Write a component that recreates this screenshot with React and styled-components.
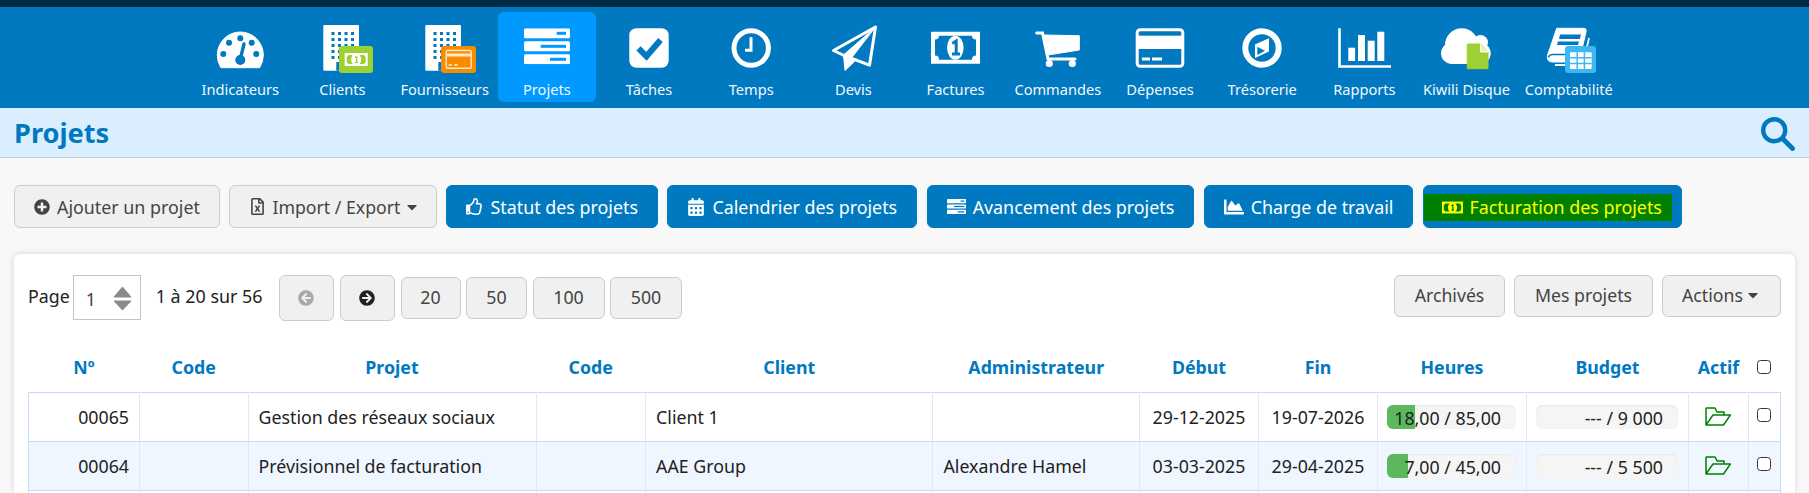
import React from "react";
import styled, { createGlobalStyle } from "styled-components";
import {
  FaPlusCircle,
  FaRegFileExcel,
  FaCaretDown,
  FaRegThumbsUp,
  FaChartArea,
  FaArrowCircleLeft,
  FaArrowCircleRight,
} from "react-icons/fa";
import { FaCalendarDays } from "react-icons/fa6";

const BLUE = "#0079c1";
const FONT = `"Noto Sans", "Open Sans", sans-serif`;

const Global = createGlobalStyle`
  html, body { margin: 0; padding: 0; background: #f8f8f8; }
  body { font-family: ${FONT}; overflow: hidden; }
  * { box-sizing: border-box; }
`;

const Page = styled.div`
  height: 493px;
  overflow: hidden;
  display: flex;
  flex-direction: column;
`;
const TopStrip = styled.div`
  height: 7px;
  background: #002b47;
  flex: none;
`;
const Nav = styled.nav`
  height: 101px;
  flex: none;
  background: ${BLUE};
  padding-top: 5px;
  display: flex;
  justify-content: center;
  gap: 4.2px;
`;
const NavItem = styled.a`
  width: 98px;
  height: 90px;
  border-radius: 6px;
  background: ${(p) => (p.$active ? "#0099ff" : "transparent")};
  display: flex;
  flex-direction: column;
  align-items: center;
  padding-top: 12px;
  color: #fff;
`;
const NavIconSvg = styled.svg`
  width: 60px;
  height: 50px;
  overflow: visible;
  flex: none;
`;
const NavLabel = styled.span`
  font-size: 14.6px;
  line-height: 20px;
  margin-top: 5px;
  white-space: nowrap;
  color: #f2f8fc;
`;
const TitleBar = styled.header`
  height: 50px;
  flex: none;
  background: #dbeeff;
  border-bottom: 1px solid #b8c9db;
  display: flex;
  align-items: center;
  justify-content: space-between;
  padding: 0 14px;
`;
const Title = styled.h1`
  margin: 1px 0 0;
  font-size: 27.2px;
  font-weight: 700;
  color: ${BLUE};
  line-height: 1;
`;
const SearchSvg = styled.svg`
  width: 34px;
  height: 34px;
  margin-top: 2px;
`;
const ActionBar = styled.div`
  display: flex;
  gap: 9.5px;
  padding: 27px 14px 26px;
  flex: none;
`;
const Btn = styled.button`
  height: 43px;
  font-family: ${FONT};
  font-size: 17.85px;
  border-radius: 6px;
  display: inline-flex;
  align-items: center;
  gap: 7px;
  padding: 0 19px;
  white-space: nowrap;
  border: 1px solid ${(p) => (p.$primary ? BLUE : "#cccccc")};
  background: ${(p) => (p.$primary ? BLUE : "#f0f0f0")};
  color: ${(p) => (p.$primary ? "#fff" : "#444")};
  svg { flex: none; }
`;
const ImportBtn = styled(Btn)`
  gap: 6px;
  font-size: 17.7px;
  padding-right: 15.5px;
`;
const HighlightBtn = styled(Btn)`
  padding: 0 9px 0 0;
`;
const Highlight = styled.span`
  height: 27px;
  background: #008000;
  color: #ffff00;
  display: inline-flex;
  align-items: center;
  gap: 6px;
  padding: 0 10px 0 18.5px;
  margin-top: 1px;
`;
const Card = styled.section`
  flex: 1;
  margin: 0 14px;
  background: #fff;
  border-radius: 6px 6px 0 0;
  box-shadow: 0 0 6px rgba(0, 0, 0, 0.14);
  padding: 21px 14px 0;
  min-height: 0;
`;
const Toolbar = styled.div`
  display: flex;
  align-items: flex-start;
  height: 46px;
  margin-bottom: 21px;
`;
const PageLabel = styled.span`
  font-size: 17.8px;
  color: #222;
  margin-right: 3px;
  line-height: 42px;
`;
const PageInput = styled.div`
  width: 68px;
  height: 45px;
  border: 1px solid #c4c4c4;
  display: flex;
  align-items: center;
  justify-content: space-between;
  padding: 2px 8px 0 12px;
  font-size: 17.8px;
  color: #444;
  background: #fff;
`;
const RangeText = styled.span`
  font-size: 17.9px;
  color: #222;
  line-height: 42px;
  margin: 0 16px 0 15px;
  white-space: nowrap;
`;
const IconBtn = styled.button`
  width: 55.5px;
  height: 45.5px;
  margin-right: 5.5px;
  border: 1px solid #cccccc;
  border-radius: 6px;
  background: #f0f0f0;
  display: flex;
  align-items: center;
  justify-content: center;
  color: ${(p) => (p.$off ? "#a8a8a8" : "#222")};
  font-size: 16px;
`;
const SizeBtn = styled.button`
  height: 42px;
  margin: 2px 5.5px 0 0;
  padding: 0 0 2px;
  width: ${(p) => p.$w}px;
  border: 1px solid #cccccc;
  border-radius: 6px;
  background: #f0f0f0;
  font-family: ${FONT};
  font-size: 17.8px;
  color: #444;
`;
const Spacer = styled.div`
  flex: 1;
`;
const RightBtn = styled.button`
  height: 42px;
  padding: 0 0 2px;
  width: ${(p) => p.$w}px;
  margin-left: 9px;
  border: 1px solid #cccccc;
  border-radius: 6px;
  background: #f0f0f0;
  font-family: ${FONT};
  font-size: 17.7px;
  color: #444;
  display: inline-flex;
  align-items: center;
  justify-content: center;
  gap: 5px;
`;
const Table = styled.table`
  width: 1752px;
  table-layout: fixed;
  border-collapse: collapse;
  font-size: 17.8px;
`;
const Th = styled.th`
  height: 50px;
  padding: 0;
  color: ${BLUE};
  font-weight: 700;
  text-align: center;
  vertical-align: middle;
`;
const Row = styled.tr`
  background: ${(p) => (p.$alt ? "#eff6ff" : "#fff")};
  td {
    border-top: 1px solid #c9d9fb;
    border-bottom: 1px solid #c9d9fb;
  }
  td:first-child { border-left: 1px solid #c9d9fb; }
  td:last-child { border-right: 1px solid #c9d9fb; }
`;
const Td = styled.td`
  height: 49px;
  padding: 0 ${(p) => (p.$align === "center" ? 0 : 10)}px;
  color: #222;
  text-align: ${(p) => p.$align || "left"};
  border-left: 1px solid #e5e8ee;
  border-right: 1px solid #e5e8ee;
  white-space: nowrap;
`;
const Bar = styled.div`
  position: relative;
  height: 24px;
  margin: 1px -0.5px 0;
  border-radius: 6px;
  background: #f5f5f5;
  box-shadow: inset 0 1px 2px rgba(0, 0, 0, 0.06);
  overflow: hidden;
  text-align: right;
  padding-right: 15.5px;
  line-height: 26px;
  color: #222;
`;
const BarFill = styled.div`
  position: absolute;
  left: 0;
  top: 0;
  bottom: 0;
  background: #5cb85c;
`;
const BarText = styled.span`
  position: relative;
`;
const Check = styled.input.attrs({ type: "checkbox" })`
  appearance: none;
  width: 14px;
  height: 14px;
  border: 1.4px solid #333;
  border-radius: 3.5px;
  background: #fff;
  display: block;
  margin: ${(p) => (p.$head ? "0 auto" : "-3px auto 0")};
`;
const FolderSvg = styled.svg`
  width: 26px;
  height: 19px;
  display: block;
  margin: 0 auto 1px;
`;
const Caret = styled(FaCaretDown)`
  margin-left: -3px;
  font-size: 16px;
`;
const ImportCaret = styled(FaCaretDown)`
  margin-left: -2px;
  font-size: 16px;
`;

/* ---------- drawn icons ---------- */
const NavIcon = ({ children }) => <NavIconSvg viewBox="0 0 60 50">{children}</NavIconSvg>;

const building = (x) => {
  const dots = [];
  [8.2, 14.7, 21.2, 27.7].forEach((cx) =>
    [8, 14, 20, 26, 32].forEach((cy) => dots.push(<rect key={cx + "-" + cy} x={x + cx} y={cy} width="3" height="3" fill={BLUE} />))
  );
  return (
    <>
      <rect x={x} y="1" width="35.7" height="45.7" rx="1" fill="#fff" />
      {dots}
      <rect x={x + 13} y="38" width="5" height="8.7" fill={BLUE} />
    </>
  );
};

const Gauge = () => (
  <NavIcon>
    <path d="M11 43.7Q7.3 38 7.3 31A23 23 0 0 1 53.3 31Q53.3 38 49.6 43.7Z" fill="#fff" stroke="#fff" strokeLinejoin="round" />
    {[[30.3, 14.3], [19, 18.7], [41.7, 18.7], [13.3, 30], [46.3, 30]].map(([cx, cy]) => (
      <circle key={cx} cx={cx} cy={cy} r="3" fill={BLUE} />
    ))}
    <path d="M34 20L30.3 35" stroke={BLUE} strokeWidth="3.4" strokeLinecap="round" />
    <circle cx="30.3" cy="36" r="5" fill={BLUE} />
  </NavIcon>
);
const MiniCash = ({ x, y, fg = "#fff", hole = "#9ed033" }) => (
  <g transform={`translate(${x} ${y})`}>
    <rect width="23" height="13" fill={fg} />
    <path d="M3.5 2H19.5Q19.5 3.5 21 3.5V9.5Q19.5 9.5 19.5 11H3.5Q3.5 9.5 2 9.5V3.5Q3.5 3.5 3.5 2Z" fill={hole} />
    <ellipse cx="11.5" cy="6.5" rx="5" ry="6" fill={fg} />
    <path d="M10.4 4.6L11.9 3.6V9.4M10.4 9.4H13.3" fill="none" stroke={hole} strokeWidth="1.3" />
  </g>
);
const Clients = () => (
  <NavIcon>
    {building(11.3)}
    <rect x="27" y="22" width="34" height="27" rx="3" fill="#9ed033" />
    <MiniCash x="32.7" y="29" />
  </NavIcon>
);
const Suppliers = () => (
  <NavIcon>
    {building(10.3)}
    <rect x="26" y="22" width="35" height="27" rx="3" fill="#f78c00" />
    <rect x="31.2" y="26.5" width="25" height="17.7" rx="1.2" fill="none" stroke="#ffe6c4" strokeWidth="1.4" />
    <rect x="31" y="29.5" width="25.4" height="3" fill="#ffe6c4" />
    <path d="M33.5 41H37M39 41H43" stroke="#ffe6c4" strokeWidth="1.4" />
  </NavIcon>
);
const Bars = ({ w = 46, h = 36, notch = "#0099ff" }) => (
  <svg viewBox="0 0 46 36" width={w} height={h}>
    {[[0, 32.7], [13, 16.7], [26, 26]].map(([y, x]) => (
      <g key={y}>
        <rect y={y} width="46" height="10" rx="1.5" fill="#fff" />
        <rect x={x} y={y + 3.5} width={42 - x} height="3" fill={notch} />
      </g>
    ))}
  </svg>
);
const Projects = () => (
  <NavIcon>
    <svg x="7" y="4.3" width="46" height="36" viewBox="0 0 46 36">
      {[[0, 32.7], [13, 16.7], [26, 26]].map(([y, x]) => (
        <g key={y}>
          <rect y={y} width="46" height="10" rx="1.5" fill="#fff" />
          <rect x={x} y={y + 3.5} width={42 - x} height="3" fill="#0099ff" />
        </g>
      ))}
    </svg>
  </NavIcon>
);
const Tasks = () => (
  <NavIcon>
    <rect x="10.3" y="4.3" width="39.4" height="39.4" rx="7" fill="#fff" />
    <path d="M19.5 24.3L27.5 32.3L41.5 16" fill="none" stroke={BLUE} strokeWidth="6" />
  </NavIcon>
);
const Clock = () => (
  <NavIcon>
    <circle cx="30.2" cy="24" r="17.2" fill="none" stroke="#fff" strokeWidth="5" />
    <path d="M30 13.3V26.3H24" fill="none" stroke="#fff" strokeWidth="3" />
  </NavIcon>
);
const Plane = () => (
  <NavIcon>
    <path d="M52.5 3L10.5 26.5L21 31.5L46.5 41.2Z" fill="none" stroke="#fff" strokeWidth="3" strokeLinejoin="round" />
    <path d="M52.5 3L20.5 31L22 46.5L31.5 37.5L28.5 34Z" fill="#fff" stroke="#fff" strokeLinejoin="round" />
  </NavIcon>
);
const Cash = () => (
  <NavIcon>
    <rect x="5" y="7.7" width="49" height="32" rx="0.5" fill="#fff" />
    <path d="M13 11.7H46Q46 15.5 50 15.5V31.5Q46 31.5 46 35.7H13Q13 31.5 9 31.5V15.5Q13 15.5 13 11.7Z" fill={BLUE} />
    <ellipse cx="29.3" cy="23.7" rx="8.3" ry="12" fill="#fff" />
    <path d="M26.3 19.5L30.2 17V30M26 30H34" fill="none" stroke={BLUE} strokeWidth="3" />
  </NavIcon>
);
const Cart = () => (
  <NavIcon>
    <path d="M8.7 9H14.5L20 35H47" fill="none" stroke="#fff" strokeWidth="3" strokeLinecap="round" />
    <path d="M15 11L51.3 11.7V26L20 31Z" fill="#fff" stroke="#fff" strokeLinejoin="round" />
    <circle cx="21.3" cy="39.5" r="3.6" fill="#fff" />
    <circle cx="44.3" cy="39.5" r="3.6" fill="#fff" />
  </NavIcon>
);
const CreditCard = () => (
  <NavIcon>
    <rect x="7.2" y="5.8" width="45.6" height="36.4" rx="3" fill="none" stroke="#fff" strokeWidth="3" />
    <rect x="7" y="11.7" width="46" height="13.3" fill="#fff" />
    <path d="M12 35H20M22 35H32" stroke="#fff" strokeWidth="3" />
  </NavIcon>
);
const Compass = () => (
  <NavIcon>
    <circle cx="30" cy="24" r="16.7" fill="none" stroke="#fff" strokeWidth="6" />
    <path d="M23 20.5L37 14.3V27.5L23 34Z" fill="#fff" />
    <path d="M25.3 22.7V31L33 26.7Z" fill={BLUE} />
  </NavIcon>
);
const Reports = () => (
  <NavIcon>
    <path d="M5.5 4.3V42.5H57" fill="none" stroke="#fff" strokeWidth="2.6" />
    <rect x="14.3" y="23.7" width="6.8" height="13.3" fill="#fff" />
    <rect x="24" y="11" width="7" height="26" fill="#fff" />
    <rect x="33.7" y="16.7" width="7" height="20.3" fill="#fff" />
    <rect x="43.3" y="7.7" width="7" height="29.3" fill="#fff" />
  </NavIcon>
);
const CloudDoc = () => (
  <NavIcon>
    <circle cx="24.7" cy="21" r="16.7" fill="#fff" />
    <circle cx="14.7" cy="29.3" r="10.7" fill="#fff" />
    <circle cx="43.5" cy="18.5" r="7.5" fill="#fff" />
    <circle cx="43" cy="29.3" r="10.7" fill="#fff" />
    <rect x="15" y="24" width="28" height="16" fill="#fff" />
    <path d="M30.3 20H43.5L51 28V44.7H30.3Z" fill="#9ed033" stroke="#9ed033" strokeLinejoin="round" />
    <path d="M43.5 20V28H51" fill="#e9f5cc" stroke="#fff" strokeWidth="1" />
  </NavIcon>
);
const Accounting = () => (
  <NavIcon>
    <path d="M17.7 4.3H44.5Q48 4.3 47 8L40 38H14Q8 38 8.3 33Q8.5 30 10 27Z" fill="#fff" stroke="#fff" strokeLinejoin="round" />
    <path d="M21 10.5H42L40.8 15H20ZM18.8 17.5H40L39 21H18Z" fill={BLUE} />
    <path d="M9.5 33.5Q10 30.5 14 30.5H38" fill="none" stroke={BLUE} strokeWidth="1.6" />
    <path d="M50 14L44 41H16" fill="none" stroke="#fff" strokeWidth="1.8" />
    <rect x="26" y="22" width="31" height="27" rx="3" fill="#3db8f5" />
    <rect x="31" y="28.3" width="21.7" height="16.7" rx="1" fill="#fff" />
    <path d="M31 33.8H52.7M31 39.4H52.7M38.2 28.3V45M45.4 28.3V45" stroke="#3db8f5" strokeWidth="1.5" />
  </NavIcon>
);
const SmallCash = () => (
  <svg viewBox="0 0 23 13" width="21" height="13">
    <MiniCash x="0" y="0" fg="#ffff00" hole="#008000" />
  </svg>
);
const Search = () => (
  <SearchSvg viewBox="0 0 34 34">
    <circle cx="13.2" cy="13.2" r="11" fill="none" stroke={BLUE} strokeWidth="4.4" />
    <path d="M22 22L31.5 31.5" stroke={BLUE} strokeWidth="4.8" strokeLinecap="round" />
  </SearchSvg>
);
const Spinner = () => (
  <svg viewBox="0 0 19 25" width="19" height="25">
    <path d="M9.5 1L18 11H1Z" fill="#8a8a8a" stroke="#8a8a8a" strokeLinejoin="round" />
    <path d="M9.5 24L18 15H1Z" fill="#8a8a8a" stroke="#8a8a8a" strokeLinejoin="round" />
  </svg>
);
const Folder = () => (
  <FolderSvg viewBox="0 0 26 19">
    <path d="M1 18V1.5Q1 1 1.5 1H10L12 5H19V8M1 18L8 8H25.5L18.5 18Z" fill="none" stroke="#008000" strokeWidth="1.5" strokeLinejoin="round" />
  </FolderSvg>
);

const navItems = [
  ["Indicateurs", Gauge],
  ["Clients", Clients],
  ["Fournisseurs", Suppliers],
  ["Projets", Projects, true],
  ["Tâches", Tasks],
  ["Temps", Clock],
  ["Devis", Plane],
  ["Factures", Cash],
  ["Commandes", Cart],
  ["Dépenses", CreditCard],
  ["Trésorerie", Compass],
  ["Rapports", Reports],
  ["Kiwili Disque", CloudDoc],
  ["Comptabilité", Accounting],
];

const cols = [111, 108.5, 288, 109.6, 287.4, 206.5, 119, 119, 149, 162, 60, 32];
const headers = ["Nº", "Code", "Projet", "Code", "Client", "Administrateur", "Début", "Fin", "Heures", "Budget", "Actif"];
const rows = [
  { n: "00065", p: "Gestion des réseaux sociaux", c: "Client 1", a: "", d: "29-12-2025", f: "19-07-2026", h: "18,00 / 85,00", pct: 21, b: "--- / 9 000" },
  { n: "00064", p: "Prévisionnel de facturation", c: "AAE Group", a: "Alexandre Hamel", d: "03-03-2025", f: "29-04-2025", h: "7,00 / 45,00", pct: 16, b: "--- / 5 500" },
];

export default function App() {
  return (
    <Page>
      <Global />
      <TopStrip />
      <Nav>
        {navItems.map(([label, Icon, active]) => (
          <NavItem key={label} $active={active}>
            <Icon />
            <NavLabel>{label}</NavLabel>
          </NavItem>
        ))}
      </Nav>
      <TitleBar>
        <Title>Projets</Title>
        <Search />
      </TitleBar>
      <ActionBar>
        <Btn><FaPlusCircle size={16} />Ajouter un projet</Btn>
        <ImportBtn><FaRegFileExcel size={17} />Import / Export<ImportCaret /></ImportBtn>
        <Btn $primary><FaRegThumbsUp size={17} />Statut des projets</Btn>
        <Btn $primary><FaCalendarDays size={18} />Calendrier des projets</Btn>
        <Btn $primary><Bars w={19} h={15} notch={BLUE} />Avancement des projets</Btn>
        <Btn $primary><FaChartArea size={20} />Charge de travail</Btn>
        <HighlightBtn $primary>
          <Highlight><SmallCash />Facturation des projets</Highlight>
        </HighlightBtn>
      </ActionBar>
      <Card>
        <Toolbar>
          <PageLabel>Page</PageLabel>
          <PageInput>1<Spinner /></PageInput>
          <RangeText>1 à 20 sur 56</RangeText>
          <IconBtn $off><FaArrowCircleLeft /></IconBtn>
          <IconBtn><FaArrowCircleRight /></IconBtn>
          <SizeBtn $w={60}>20</SizeBtn>
          <SizeBtn $w={61}>50</SizeBtn>
          <SizeBtn $w={72}>100</SizeBtn>
          <SizeBtn $w={72}>500</SizeBtn>
          <Spacer />
          <RightBtn $w={111}>Archivés</RightBtn>
          <RightBtn $w={139}>Mes projets</RightBtn>
          <RightBtn $w={119}>Actions<Caret /></RightBtn>
        </Toolbar>
        <Table>
          <colgroup>
            {cols.map((w, i) => <col key={i} style={{ width: w }} />)}
          </colgroup>
          <thead>
            <tr>
              {headers.map((h, i) => <Th key={i}>{h}</Th>)}
              <Th><Check $head /></Th>
            </tr>
          </thead>
          <tbody>
            {rows.map((r, i) => (
              <Row key={r.n} $alt={i === 1}>
                <Td $align="right">{r.n}</Td>
                <Td />
                <Td>{r.p}</Td>
                <Td />
                <Td>{r.c}</Td>
                <Td>{r.a}</Td>
                <Td $align="center">{r.d}</Td>
                <Td $align="center">{r.f}</Td>
                <Td>
                  <Bar>
                    <BarFill style={{ width: `${r.pct}%` }} />
                    <BarText>{r.h}</BarText>
                  </Bar>
                </Td>
                <Td>
                  <Bar><BarText>{r.b}</BarText></Bar>
                </Td>
                <Td $align="center"><Folder /></Td>
                <Td $align="center"><Check /></Td>
              </Row>
            ))}
            <Row>
              {cols.map((_, i) => <Td key={i} />)}
            </Row>
          </tbody>
        </Table>
      </Card>
    </Page>
  );
}
